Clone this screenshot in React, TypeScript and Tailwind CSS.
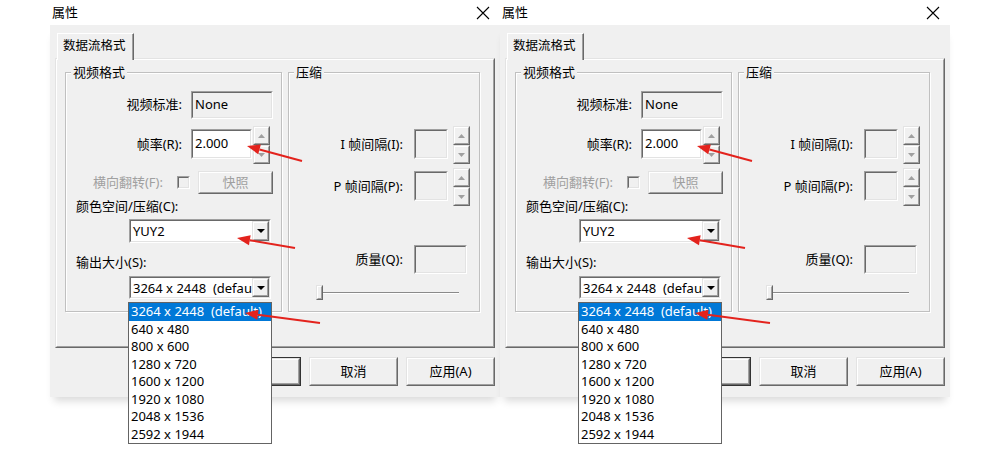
import React from "react";

// Classic Win32 3D edges: outer + inner 1px frames
function Sunken({
  className = "",
  bg = "bg-[#f0f0f0]",
  children,
}: {
  className?: string;
  bg?: string;
  children?: React.ReactNode;
}) {
  return (
    <div
      className={`border border-t-[#a0a0a0] border-l-[#a0a0a0] border-r-white border-b-white ${className}`}
    >
      <div
        className={`h-full w-full border border-t-[#696969] border-l-[#696969] border-r-[#e3e3e3] border-b-[#e3e3e3] ${bg}`}
      >
        {children}
      </div>
    </div>
  );
}

function Raised({
  className = "",
  innerClassName = "",
  children,
}: {
  className?: string;
  innerClassName?: string;
  children?: React.ReactNode;
}) {
  return (
    <div
      className={`border border-t-[#e3e3e3] border-l-[#e3e3e3] border-r-[#696969] border-b-[#696969] bg-[#f0f0f0] ${className}`}
    >
      <div
        className={`h-full w-full border border-t-white border-l-white border-r-[#a0a0a0] border-b-[#a0a0a0] ${innerClassName}`}
      >
        {children}
      </div>
    </div>
  );
}

function Tri({ down = false, color }: { down?: boolean; color: string }) {
  return (
    <svg width="7" height="4" viewBox="0 0 7 4">
      <polygon points={down ? "0,0 7,0 3.5,4" : "0,4 7,4 3.5,0"} fill={color} />
    </svg>
  );
}

function Spinner({ className = "" }: { className?: string }) {
  return (
    <div className={`flex w-[17px] flex-col ${className}`}>
      <Raised className="h-[19px]" innerClassName="flex items-center justify-center">
        <Tri color="#a0a0a0" />
      </Raised>
      <Raised className="h-[19px]" innerClassName="flex items-center justify-center">
        <Tri down color="#a0a0a0" />
      </Raised>
    </div>
  );
}

function Combo({ value, className = "" }: { value: string; className?: string }) {
  return (
    <Sunken className={`w-[142px] ${className}`} bg="bg-white">
      <div className="flex h-full items-center">
        <span className="min-w-0 flex-1 overflow-hidden whitespace-pre pl-[2px] leading-[18px]">
          {value}
        </span>
        <Raised className="h-full w-[17px]" innerClassName="flex items-center justify-center">
          <svg width="8" height="4" viewBox="0 0 8 4">
            <polygon points="0,0 8,0 4,4" fill="#000" />
          </svg>
        </Raised>
      </div>
    </Sunken>
  );
}

function Group({
  title,
  className = "",
  children,
}: {
  title: string;
  className?: string;
  children?: React.ReactNode;
}) {
  return (
    <div
      className={`flex flex-col border border-[#c0c0c0] shadow-[inset_1px_1px_0_#fff,1px_1px_0_#fff] ${className}`}
    >
      <span className="-mt-[10px] ml-[5px] h-[18px] w-fit bg-[#f0f0f0] px-[2px] leading-[18px]">
        {title}
      </span>
      {children}
    </div>
  );
}

function Arrow({ x1, y1, x2, y2 }: { x1: number; y1: number; x2: number; y2: number }) {
  const len = Math.hypot(x2 - x1, y2 - y1);
  const dx = (x2 - x1) / len;
  const dy = (y2 - y1) / len;
  const bx = x2 - dx * 13;
  const by = y2 - dy * 13;
  const nx = -dy * 5;
  const ny = dx * 5;
  return (
    <g>
      <line x1={x1} y1={y1} x2={bx} y2={by} stroke="#e3231d" strokeWidth="2" />
      <polygon
        points={`${x2},${y2} ${bx + nx},${by + ny} ${bx - nx},${by - ny}`}
        fill="#e3231d"
      />
    </g>
  );
}

const SIZES = [
  "3264 x 2448  (default)",
  "640 x 480",
  "800 x 600",
  "1280 x 720",
  "1600 x 1200",
  "1920 x 1080",
  "2048 x 1536",
  "2592 x 1944",
];

function Dialog() {
  return (
    <div className="relative h-[450px] w-[450px]">
      {/* title bar */}
      <div className="flex h-[25px] items-center justify-between pl-[2px] pr-[10px]">
        <span className="text-[13px]">属性</span>
        <svg width="14" height="14" viewBox="0 0 14 14">
          <path d="M1 1 L13 13 M13 1 L1 13" stroke="#000" strokeWidth="1.1" />
        </svg>
      </div>

      <div className="h-[372px] bg-[#f0f0f0] px-[5px] pt-[8px] shadow-[0_8px_8px_-4px_rgba(0,0,0,0.15)]">
        {/* tab header */}
        <div className="relative z-10 -mb-[2px] ml-[2px] flex h-[27px] w-[77px] border-t border-l border-r border-t-white border-l-white border-r-[#696969] bg-[#f0f0f0] shadow-[inset_-1px_0_0_#a0a0a0] pl-[5px] pt-[3px] text-[12.5px]">
          数据流格式
        </div>

        {/* tab page */}
        <Raised className="h-[290px] w-[440px]" innerClassName="flex gap-[6px] pl-[8px] pt-[12px]">
          <Group title="视频格式" className="h-[240px] w-[217px]">
            <div className="mt-[10px] flex h-[28px] items-center">
              <span className="w-[116px] text-right">视频标准:</span>
              <Sunken className="ml-[9px] h-[28px] w-[82px]">
                <div className="flex h-full items-center pl-[2px]">None</div>
              </Sunken>
            </div>

            <div className="mt-[7px] flex h-[38px] items-start">
              <span className="w-[116px] self-center text-right">帧率(R):</span>
              <Sunken className="ml-[9px] mt-[3px] h-[30px] w-[61px]" bg="bg-white">
                <div className="flex h-full items-center pl-[2px]">2.000</div>
              </Sunken>
              <Spinner className="ml-[1px]" />
            </div>

            <div className="mt-[7px] flex h-[23px] items-center">
              <span className="w-[97px] text-right text-[#a0a0a0]">横向翻转(F):</span>
              <Sunken className="ml-[14px] h-[13px] w-[13px]" />
              <Raised
                className="ml-[8px] h-[23px] w-[75px]"
                innerClassName="flex items-center justify-center text-[#a0a0a0]"
              >
                快照
              </Raised>
            </div>

            <div className="mt-[3px] h-[18px] pl-[10px] leading-[18px]">颜色空间/压缩(C):</div>
            <Combo value="YUY2" className="ml-[63px] mt-[4px] h-[24px]" />
            <div className="mt-[10px] h-[18px] pl-[10px] leading-[18px]">输出大小(S):</div>
            <Combo value="3264 x 2448  (default)" className="ml-[63px] mt-[5px] h-[23px]" />
          </Group>

          <Group title="压缩" className="h-[240px] w-[192px]">
            <div className="mt-[45px] flex h-[38px] items-start">
              <span className="w-[114px] self-center text-right">I 帧间隔(I):</span>
              <Sunken className="ml-[11px] mt-[3px] h-[30px] w-[34px]" />
              <Spinner className="ml-[5px]" />
            </div>
            <div className="mt-[4px] flex h-[38px] items-start">
              <span className="w-[114px] self-center text-right">P 帧间隔(P):</span>
              <Sunken className="ml-[11px] mt-[3px] h-[30px] w-[34px]" />
              <Spinner className="ml-[5px]" />
            </div>
            <div className="mt-[39px] flex h-[29px] items-center">
              <span className="w-[114px] text-right">质量(Q):</span>
              <Sunken className="ml-[11px] h-[29px] w-[53px]" />
            </div>
            <div className="ml-[27px] mt-[11px] flex h-[15px] items-center">
              <Raised className="h-[15px] w-[7px]" />
              <div className="h-[2px] w-[136px] border-t border-b border-t-[#8a8a8a] border-b-white" />
            </div>
          </Group>
        </Raised>

        {/* dialog buttons */}
        <div className="mt-[9px] flex justify-end gap-[8px]">
          <div className="h-[29px] w-[89px] border border-[#333]">
            <Raised className="h-full w-full" innerClassName="flex items-center justify-center">
              确定
            </Raised>
          </div>
          <Raised className="h-[29px] w-[89px]" innerClassName="flex items-center justify-center">
            取消
          </Raised>
          <Raised className="h-[29px] w-[89px]" innerClassName="flex items-center justify-center">
            应用(A)
          </Raised>
        </div>
      </div>

      {/* open size list */}
      <div className="absolute left-[78px] top-[302px] z-20 w-[144px] border border-[#646464] bg-white">
        {SIZES.map((s, i) => (
          <div
            key={s}
            className={`h-[17.5px] whitespace-pre pl-[2px] leading-[17.5px] ${
              i === 0 ? "bg-[#0078d7] text-white" : ""
            }`}
          >
            {s}
          </div>
        ))}
      </div>

      <svg className="pointer-events-none absolute left-0 top-0 z-30" width="450" height="450">
        <Arrow x1={252} y1={161} x2={197} y2={146} />
        <Arrow x1={245} y1={248} x2={187} y2={238} />
        <Arrow x1={270} y1={323} x2={195} y2={313} />
      </svg>
    </div>
  );
}

export default function App() {
  return (
    <div className="flex h-[450px] w-[1000px] bg-white pl-[50px] font-['Noto_Sans','Noto_Sans_CJK_SC',sans-serif] text-[13px] text-black">
      <Dialog />
      <Dialog />
    </div>
  );
}
